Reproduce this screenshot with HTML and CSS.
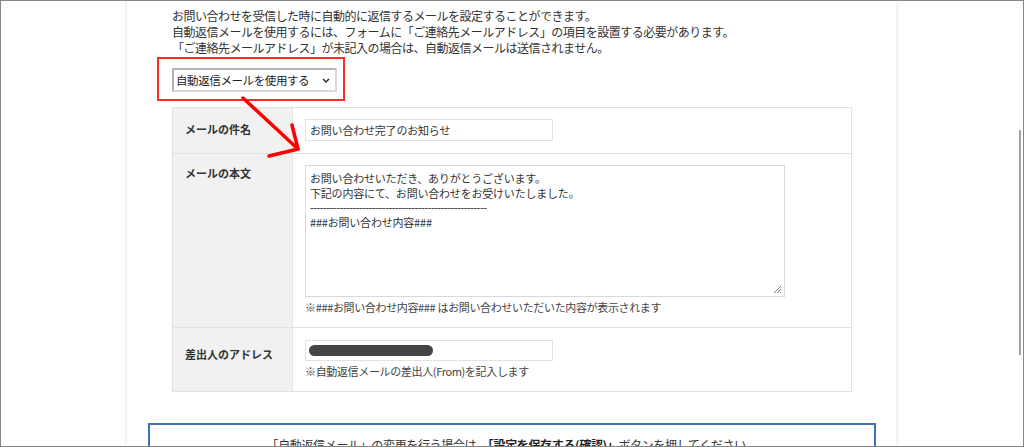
FILE: index.html
```html
<!DOCTYPE html>
<html lang="ja">
<head>
<meta charset="utf-8">
<title>自動返信メール設定</title>
<link rel="stylesheet" href="styles.css">
</head>
<body>
<div class="frame">
  <div class="panel">
    <div class="intro">
      <p>お問い合わせを受信した時に自動的に返信するメールを設定することができます。</p>
      <p>自動返信メールを使用するには、フォームに「ご連絡先メールアドレス」の項目を設置する必要があります。</p>
      <p>「ご連絡先メールアドレス」が未記入の場合は、自動返信メールは送信されません。</p>
    </div>
    <div class="select-row">
      <div class="select">
        <span>自動返信メールを使用する</span>
        <svg class="chev" width="8" height="5" viewBox="0 0 8 5"><path d="M1 1 L4 4 L7 1" fill="none" stroke="#222" stroke-width="1.4"/></svg>
      </div>
      <div class="redbox"></div>
    </div>
    <table class="form">
      <tr class="r1">
        <th>メールの件名</th>
        <td><div class="input">お問い合わせ完了のお知らせ</div></td>
      </tr>
      <tr class="r2">
        <th>メールの本文</th>
        <td>
          <div class="textarea">
            <div>お問い合わせいただき、ありがとうございます。</div>
            <div>下記の内容にて、お問い合わせをお受けいたしました。</div>
            <div class="dashes">------------------------------------------------------</div>
            <div>###お問い合わせ内容###</div>
            <svg class="grip" width="9" height="9" viewBox="0 0 9 9"><path d="M8 1 L1 8 M8 4 L4 8 M8 7 L7 8" stroke="#777" stroke-width="1"/></svg>
          </div>
          <p class="note">※###お問い合わせ内容### はお問い合わせいただいた内容が表示されます</p>
        </td>
      </tr>
      <tr class="r3">
        <th>差出人のアドレス</th>
        <td>
          <div class="input"><span class="redact"></span></div>
          <p class="note">※自動返信メールの差出人(From)を記入します</p>
        </td>
      </tr>
    </table>
    <div class="notice">「自動返信メール」の変更を行う場合は、<b>「設定を保存する(確認)」</b>ボタンを押してください。</div>
  </div>
  <svg class="arrow" width="1024" height="447" viewBox="0 0 1024 447">
    <path d="M243 98 L298 149" stroke="#ff0000" stroke-width="3.5" fill="none" stroke-linecap="round"/>
    <path d="M292 125 L298 149 L269 156" stroke="#ff0000" stroke-width="3.5" fill="none" stroke-linecap="round" stroke-linejoin="round"/>
  </svg>
  <div class="scroll"></div>
</div>
</body>
</html>
```
FILE: styles.css
```css
* { box-sizing: border-box; }
html, body { margin: 0; padding: 0; background: #fff; }
body { font-family: "Noto Sans CJK JP", "Noto Sans", sans-serif; color: #333; }
.frame {
  position: relative;
  width: 1024px;
  height: 447px;
  border: 1px solid #858585;
  overflow: hidden;
  background: #fff;
}
.panel {
  margin-left: 126px;
  width: 769px;
  height: 445px;
  padding: 7px 0 0 45px;
  background: #fff;
  box-shadow: 0 0 4px rgba(0,0,0,0.14);
}
.intro p {
  margin: 0;
  font-size: 12px;
  line-height: 16px;
  letter-spacing: -0.5px;
  white-space: nowrap;
}
.select-row {
  position: relative;
  padding: 12px 0 15px;
}
.select {
  width: 165px;
  height: 24px;
  border: 2px solid #b4b4b4;
  border-right-color: #d8d8d8;
  border-bottom-color: #d8d8d8;
  display: flex;
  align-items: center;
  justify-content: space-between;
  padding: 0 5px 0 2px;
  font-size: 11.5px;
  color: #222;
  letter-spacing: -0.4px;
}
.chev { display: block; }
.redbox {
  position: absolute;
  left: -15px;
  top: 1px;
  width: 188px;
  height: 44px;
  border: 2px solid #ff2a2a;
}
.form {
  width: 680px;
  border-collapse: collapse;
  border: 1px solid #e2e2e2;
  font-size: 11px;
}
.form th, .form td {
  border-top: 1px solid #e2e2e2;
  padding: 12px 12px;
  text-align: left;
  vertical-align: top;
}
.form th {
  width: 120px;
  background: #f1f1f1;
  font-weight: bold;
  color: #333;
  border-right: 1px solid #e2e2e2;
  line-height: 16px;
}
.r1 td { padding-top: 11px; padding-bottom: 12px; }
.r2 td { padding-top: 11px; }
.r1 th { padding-top: 13px; }
.r2 th { padding-top: 11px; }
.r3 th { padding-top: 18px; }
.input {
  width: 248px;
  height: 22px;
  border: 1px solid #e2e2e2;
  display: flex;
  align-items: center;
  padding-left: 4px;
  font-size: 11px;
  color: #333;
  letter-spacing: -0.2px;
}
.r3 .input { height: 21px; }
.redact {
  display: block;
  width: 124px;
  height: 11px;
  border-radius: 6px;
  background: #444;
  margin-left: -1px;
}
.textarea {
  position: relative;
  width: 480px;
  height: 132px;
  border: 1px solid #d9d9d9;
  padding: 5px 4px;
  font-size: 11px;
  line-height: 14.5px;
  letter-spacing: -0.2px;
  color: #333;
}
.dashes { letter-spacing: -0.55px; overflow: hidden; white-space: nowrap; color: #222; }
.grip { position: absolute; right: 2px; bottom: 2px; }
.note {
  margin: 2px 0 0;
  font-size: 11px;
  line-height: 16px;
  letter-spacing: -0.35px;
  color: #444;
}
.notice {
  margin: 31px 0 0 -24px;
  width: 728px;
  height: 60px;
  border: 2px solid #4372b7;
  border-bottom: none;
  padding-top: 12px;
  text-align: center;
  font-size: 12px;
  line-height: 16px;
  letter-spacing: -0.35px;
  color: #333;
}
.notice b { color: #222; }
.arrow { position: absolute; left: -1px; top: -1px; pointer-events: none; }
.scroll {
  position: absolute;
  left: 1018px;
  top: 129px;
  width: 2px;
  height: 225px;
  background: #a3a3a3;
}
```
